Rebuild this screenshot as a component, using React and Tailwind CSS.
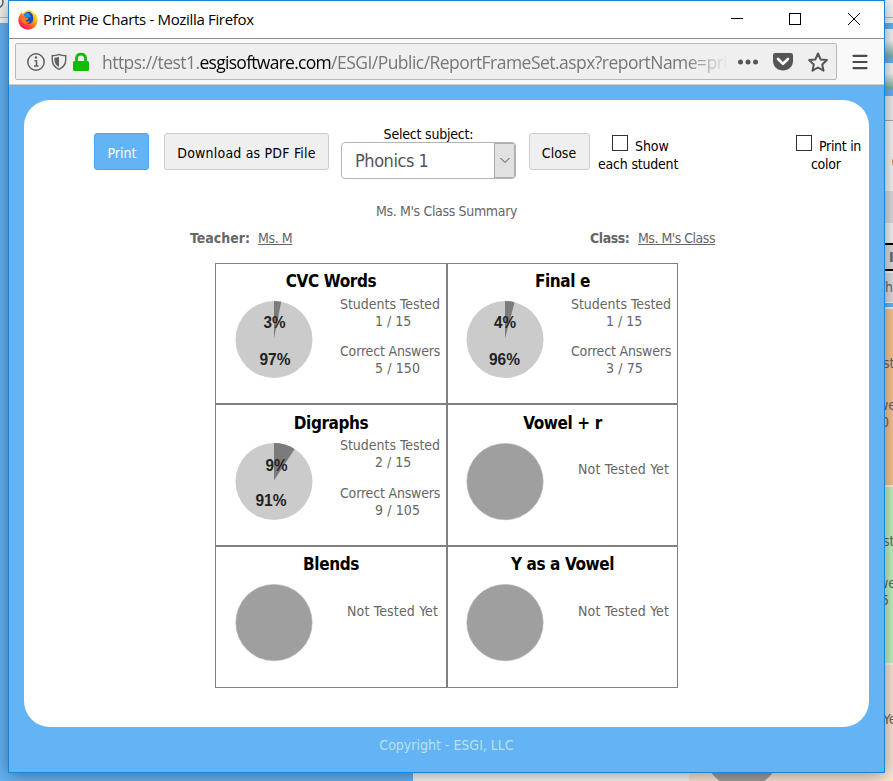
import React from "react";

const tahoma = "font-['DejaVu_Sans_Condensed','DejaVu_Sans',sans-serif] [font-stretch:condensed]";

const results = [
  { name: "CVC Words", tested: "1 / 15", correct: "5 / 150", low: 3, high: 97, lowX: 39.5, lowY: 26.5, highX: 40, highY: 63.5 },
  { name: "Final e", tested: "1 / 15", correct: "3 / 75", low: 4, high: 96, lowX: 39, lowY: 27, highX: 38.5, highY: 64 },
  { name: "Digraphs", tested: "2 / 15", correct: "9 / 105", low: 9, high: 91, lowX: 41.5, lowY: 28, highX: 36, highY: 63 },
  { name: "Vowel + r" },
  { name: "Blends" },
  { name: "Y as a Vowel" },
];

function Pie({ item }) {
  if (!item.tested) {
    return (
      <svg width="78" height="78" viewBox="0 0 78 78" className="block">
        <circle cx="39" cy="38.6" r="38.2" fill="#9f9f9f" stroke="#b5b5b5" strokeWidth="0.6" />
      </svg>
    );
  }
  const a = (item.low / 100) * Math.PI * 2;
  const x = 39 + 38.5 * Math.sin(a);
  const y = 38.5 - 38.5 * Math.cos(a);
  return (
    <svg width="78" height="78" viewBox="0 0 78 78" className="block overflow-visible font-['Liberation_Sans',sans-serif] text-[16px] font-bold">
      <circle cx="39" cy="38.5" r="38.5" fill="#cbcbcb" />
      <path d={`M39 37.5V0A38.5 38.5 0 0 1 ${x} ${y}Z`} fill="#7b7b7b" />
      <text x={item.lowX} y={item.lowY} textAnchor="middle" fill="#222" textLength="22" lengthAdjust="spacingAndGlyphs">{item.low}%</text>
      <text x={item.highX} y={item.highY} textAnchor="middle" fill="#222" textLength="31" lengthAdjust="spacingAndGlyphs">{item.high}%</text>
    </svg>
  );
}

function Cell({ item, row, right }) {
  return (
    <div className={`border border-[#808080] text-[#666] ${row === 1 ? "pt-[8px]" : "pt-[7px]"}`}>
      <h3 className="text-center text-[17px] leading-[20px] font-bold tracking-[-0.4px] text-black">{item.name}</h3>
      <div className={`flex ${right ? "pl-[18px]" : "pl-[19px]"}`}>
        <div className="mt-[10px] shrink-0"><Pie item={item} /></div>
        {item.tested ? (
          <div className={`ml-[27px] text-[14px] leading-[17px] whitespace-nowrap ${row === 0 ? "mt-[5px]" : "mt-[4px]"}`}>
            <p className="tracking-[-0.03px]">Students Tested</p>
            <p className="pl-[35px]">{item.tested}</p>
            <p className={`tracking-[-0.18px] ${row === 0 ? "mt-[13px]" : "mt-[14px]"}`}>Correct Answers</p>
            <p className="pl-[35px] tracking-[0.1px]">{item.correct}</p>
          </div>
        ) : (
          <p className={`ml-[34px] text-[14px] leading-[17px] tracking-[0.16px] whitespace-nowrap ${row === 2 ? "mt-[29px]" : "mt-[28px]"}`}>Not Tested Yet</p>
        )}
      </div>
    </div>
  );
}

function Firefox() {
  return (
    <svg width="20" height="20" viewBox="0 0 20 20">
      <defs>
        <linearGradient id="fox" x1="0.9" y1="0.05" x2="0.2" y2="0.95">
          <stop offset="0" stopColor="#fff13c" />
          <stop offset="0.35" stopColor="#ffb516" />
          <stop offset="0.65" stopColor="#ff5a2a" />
          <stop offset="1" stopColor="#e8135f" />
        </linearGradient>
      </defs>
      <path d="M2.5 4 3.2 2.2 5 4Q7 .5 11 .3 14.2.6 15.5 2.8 19.8 5 19.6 10.5 19 19 10 19.7 1 19 .3 10.5.2 6.5 2.5 4Z" fill="url(#fox)" />
      <path d="M6 4.5Q8 1.5 11.5 1.8 14.8 3.5 15.3 7.5 16 13 10.5 14 6 13.5 5.5 10L9 10.2 10.5 8.5 7 7.5Z" fill="#174fb0" />
      <path d="M6 4.6Q8 2.5 11 3.2L12.8 7 10.2 7.4 7 7.4Z" fill="#1b96e8" />
      <path d="M3 6.2 6.2 5.8 7.3 7.6 10.2 8.2 8.8 9.8 7.4 10.8Q9 12.3 12 11.2 10.2 14.5 6.8 13.6 2.8 11.5 3 6.2Z" fill="#ff7b22" />
    </svg>
  );
}

function TitleBar() {
  return (
    <div className="flex h-[38px] items-center border-b border-[#8c8c8c] bg-white pl-[9px]">
      <Firefox />
      <span className="ml-[5px] font-['Open_Sans','Noto_Sans',sans-serif] text-[15px] tracking-[-0.33px] whitespace-nowrap text-black [font-stretch:normal]">Print Pie Charts - Mozilla Firefox</span>
      <svg className="ml-auto shrink-0" width="153" height="37" fill="none" stroke="#000" shapeRendering="crispEdges">
        <path d="M0 17.5h12M58.500 12.500h11v11h-11z" />
        <path d="m117 12 12 12m0-12-12 12" shapeRendering="auto" />
      </svg>
    </div>
  );
}

function AddressBar() {
  return (
    <div className="flex h-[46px] items-center border-b border-[#ccc] bg-[#f9f9f9] pl-[6px]">
      <div className="flex h-[37px] w-[822px] shrink-0 items-center rounded-[2px] border border-[#b8b8b8] bg-[#efefef]">
        <svg width="86" height="35" className="shrink-0" fill="none">
          <circle cx="20" cy="18" r="8.2" stroke="#606060" strokeWidth="1.5" />
          <path d="M18.500 16.800h2v5M18 22h4.500" stroke="#606060" strokeWidth="1.500" />
          <circle cx="20" cy="13.500" r="1.200" fill="#606060" />
          <path d="M43 10.400q-3.500 1.500-6.700 1.200v4.800q.4 6.300 6.700 8.900 6.300-2.600 6.700-8.900v-4.800q-3.200.3-6.700-1.200z" stroke="#606060" strokeWidth="1.400" />
          <path d="M43 12.700q-2 1-4.500 1.100v3q.5 4.200 4.500 6.100z" fill="#606060" />
          <rect x="57" y="17" width="16" height="10" rx="1.500" fill="#12bc00" />
          <path d="M60.500 18v-4.200q.5-3.600 4.500-3.600t4.500 3.600V18" stroke="#12bc00" strokeWidth="2.800" />
        </svg>
        <div className="w-[627px] shrink-0 overflow-hidden pt-[1px] font-['Open_Sans','Noto_Sans',sans-serif] text-[17.5px] leading-[30px] tracking-[-0.53px] whitespace-nowrap text-[#777] [font-stretch:normal] [mask-image:linear-gradient(to_right,#000_93%,transparent)]">
          https://test1.<span className="tracking-[-0.72px] text-black">esgisoftware.com</span>/ESGI/Public/ReportFrameSet.aspx?reportName=print
        </div>
        <svg width="100" height="35" className="shrink-0" fill="none">
          <g fill="#555">
            <circle cx="11.500" cy="18" r="2.500" /><circle cx="19" cy="18" r="2.500" /><circle cx="26.500" cy="18" r="2.500" />
            <path d="M46.200 9h15.600q2.200 0 2.200 2.200V17c0 5.400-4.500 9.500-10 9.500S44 22.400 44 17v-5.800Q44 9 46.200 9z" />
          </g>
          <path d="m49 15 5 4.800 5-4.800" stroke="#fff" strokeWidth="2.600" strokeLinecap="round" strokeLinejoin="round" />
          <path d="m89 9.500 2.600 5.900 6.300.7-4.700 4.300 1.300 6.300-5.500-3.200-5.500 3.200 1.300-6.300-4.700-4.300 6.300-.7z" stroke="#555" strokeWidth="2" strokeLinejoin="round" />
        </svg>
      </div>
      <svg width="16" height="16" className="ml-[15px] shrink-0" stroke="#4a4a4a" strokeWidth="2.200" strokeLinecap="round">
        <path d="M1.500 1.800h13M1.500 8h13M1.500 14.200h13" />
      </svg>
    </div>
  );
}

function Controls() {
  return (
    <div className="flex h-[60px] items-start pt-[7px] pl-[70px] text-[14px] leading-[18px] text-black">
      <button className="mt-[6px] h-[37px] w-[55px] rounded-[3px] border border-[#4aa5f0] bg-[#64b3f5] pt-[2px] pl-[1px] text-white">Print</button>
      <button className="mt-[6px] ml-[15px] h-[37px] w-[165px] rounded-[3px] border border-[#ccc] bg-[#efefef] pt-[2px] tracking-[0.2px] whitespace-nowrap">Download as PDF File</button>
      <div className="ml-[12px] w-[175px]">
        <div className="h-[15px] text-center leading-[14px] tracking-[-0.2px]">Select subject:</div>
        <div className="flex h-[37px] overflow-hidden rounded-[4px] border border-[#b5b5b5] bg-white">
          <span className="flex-1 pl-[13px] text-[18px] leading-[35px] tracking-[-0.45px] text-[#555]">Phonics 1</span>
          <span className="flex w-[21px] items-center justify-center border border-[#adadad] bg-[#e1e1e1]">
            <svg width="10" height="7" fill="none" stroke="#444"><path d="m.5 1 4.500 4.500L9.500 1" /></svg>
          </span>
        </div>
      </div>
      <button className="mt-[6px] ml-[13px] h-[37px] w-[61px] rounded-[3px] border border-[#ccc] bg-[#efefef] pt-[2px] pr-[1px]">Close</button>
      <div className="mt-[8px] ml-[8px] w-[80px] whitespace-nowrap">
        <div className="flex h-[20px] pl-[14px]"><i className="mr-[7px] size-[16px] border border-[#333]" /><span className="pt-[2px] tracking-[-0.1px]">Show</span></div>
        <div className="text-center tracking-[-0.2px]">each student</div>
      </div>
      <div className="mt-[8px] ml-[118px] w-[66px] whitespace-nowrap">
        <div className="flex h-[20px]"><i className="mr-[7px] size-[16px] border border-[#333]" /><span className="pt-[2px] tracking-[-0.3px]">Print in</span></div>
        <div className="pl-[15px] tracking-[-0.3px]">color</div>
      </div>
    </div>
  );
}

function PageBehind() {
  return (
    <div className="flex h-[781px] w-[893px] bg-[#64b3f5]">
      <div className="flex w-[413px] flex-col">
        <div className="h-[18px] border-b border-[#bbb] bg-[#f2f2f2]">
          <svg width="8" height="17" fill="none" stroke="#666" strokeWidth="1.500"><circle cx="-3" cy="2" r="6" /></svg>
        </div>
        <div className="h-[5px] bg-[#f5f5f5]" />
      </div>
      <div className="w-[276px] bg-[#f5f5f5]" />
      <div className="flex w-[204px] flex-col overflow-hidden bg-[#f5f5f5] text-[14px] leading-[17px] text-[#666]">
        <div className="h-[18px] shrink-0 border-b border-[#bbb]" />
        <div className="mt-[5px] h-[6px] shrink-0 bg-[#64b3f5]" />
        <div className="h-[28px] shrink-0 bg-gradient-to-b from-[#f5f5f5] from-40% to-[#79aaa8]" />
        <div className="h-[6px] shrink-0 bg-[#64b3f5]" />
        <div className="h-[26px] shrink-0 bg-gradient-to-b from-[#f5f5f5] from-40% to-[#79aaa8]" />
        <div className="h-[7px] shrink-0 bg-[#64b3f5]" />
        <div className="h-[25px] shrink-0 border-b border-[#aaa] bg-[#eee]" />
        <div className="h-[70px] shrink-0 overflow-hidden bg-[#f5f5f5] pt-[32px] pl-[203px]"><div className="size-[18px] rounded-full bg-[#e98b3e]" /></div>
        <div className="h-[32px] shrink-0 bg-[#dcdcdf]" />
        <div className="mt-[20px] flex h-[28px] shrink-0 items-center border-y-2 border-black bg-[#ddd] pl-[200px] font-bold">I</div>
        <div className="mt-[2px] flex h-[29px] shrink-0 items-center bg-[#dedee2] pl-[196px]">h</div>
        <div className="mt-px mb-[2px] h-[4px] shrink-0 bg-[#64b3f5]" />
        <div className="h-[176px] shrink-0 bg-[#f8c492] pt-[46px] pl-[194px]"><p>st</p><p className="mt-[25px] -ml-[5px]">we</p><p className="-ml-[2px]">0</p></div>
        <div className="mt-[2px] h-[176px] shrink-0 bg-[#c1f3c2] pt-[46px] pl-[194px]"><p>st</p><p className="mt-[25px] -ml-[5px]">we</p><p className="-ml-[2px]">5</p></div>
        <div className="mt-[2px] h-[116px] shrink-0 bg-[#fae6d6] pt-[46px]">
          <p className="pl-[194px]">Yet</p>
          <div className="-mt-[18px] ml-[14px] size-[78px] rounded-full bg-[#9f9f9f]" />
        </div>
      </div>
    </div>
  );
}

export default function App() {
  return (
    <div className={`relative h-[781px] w-[893px] overflow-hidden ${tahoma}`}>
      <PageBehind />
      <main className="absolute top-0 left-[8px] flex h-[773px] w-[877px] flex-col border border-[#1883d7] bg-[#64b3f5] shadow-[0_2px_16px_rgba(0,0,0,0.4)]">
        <TitleBar />
        <AddressBar />
        <section className="mx-[15px] mt-[15px] h-[627px] shrink-0 rounded-[26px] bg-white pt-[20px]">
          <Controls />
          <p className="mt-[22px] text-center text-[14px] leading-[18px] tracking-[-0.34px] text-[#666]">Ms. M's Class Summary</p>
          <div className="mt-[9px] flex pl-[166px] text-[14px] leading-[18px] whitespace-nowrap text-[#666]">
            <div className="flex w-[400px] gap-[8px]"><b className="w-[60px]">Teacher:</b><span className="tracking-[-0.4px] underline">Ms. M</span></div>
            <div className="flex gap-[8px]"><b className="w-[40px] tracking-[-0.45px]">Class:</b><span className="tracking-[-0.5px] underline">Ms. M's Class</span></div>
          </div>
          <div className="mt-[16px] ml-[191px] grid w-[463px] grid-cols-[232px_231px] grid-rows-[141px_142px_142px]">
            {results.map((item, i) => <Cell key={item.name} item={item} row={Math.floor(i / 2)} right={i % 2 === 1} />)}
          </div>
        </section>
        <footer className="mt-[9px] text-center text-[14px] leading-[18px] text-[#b9e2ee]">Copyright - ESGI, LLC</footer>
      </main>
    </div>
  );
}
